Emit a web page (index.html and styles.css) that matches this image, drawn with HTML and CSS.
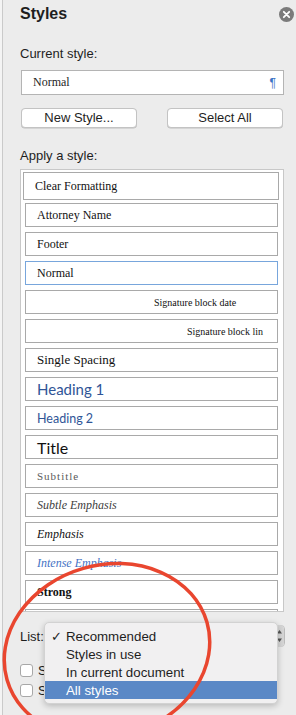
FILE: index.html
```html
<!DOCTYPE html>
<html>
<head>
<meta charset="utf-8">
<link rel="stylesheet" href="styles.css">
</head>
<body>
<div class="panel">
  <div class="head">
    <h1 class="title">Styles</h1>
    <span class="close"><svg width="15" height="15" viewBox="0 0 15 15"><circle cx="7.5" cy="7.5" r="7.5" fill="#7b7b7b"/><path d="M4.8 4.8 L10.2 10.2 M10.2 4.8 L4.8 10.2" stroke="#fff" stroke-width="1.8" stroke-linecap="round"/></svg></span>
  </div>
  <div class="label l1">Current style:</div>
  <div class="current"><span class="cur-name">Normal</span><span class="pil">¶</span></div>
  <div class="btns">
    <button class="btn">New Style...</button>
    <button class="btn">Select All</button>
  </div>
  <div class="label l2">Apply a style:</div>
  <div class="list">
    <div class="item clear">Clear Formatting</div>
    <div class="item">Attorney Name</div>
    <div class="item">Footer</div>
    <div class="item sel">Normal</div>
    <div class="item sig sig1">Signature block date</div>
    <div class="item sig sig2">Signature block lin</div>
    <div class="item single">Single Spacing</div>
    <div class="item h1">Heading 1</div>
    <div class="item h2">Heading 2</div>
    <div class="item ttl">Title</div>
    <div class="item sub">Subtitle</div>
    <div class="item sube">Subtle Emphasis</div>
    <div class="item emph">Emphasis</div>
    <div class="item inte">Intense Emphasis</div>
    <div class="item strong">Strong</div>
    <div class="item"></div>
  </div>
  <div class="listrow">
    <span class="list-label">List:</span>
    <div class="select">
      <span class="stepper"><svg width="9" height="22" viewBox="0 0 9 22"><path d="M4.5 5 L7 8.5 L2 8.5 Z M4.5 17 L7 13.5 L2 13.5 Z" fill="#555"/></svg></span>
    </div>
  </div>
  <div class="checks">
    <label class="chk"><span class="box"></span><span class="ct">S</span></label>
    <label class="chk"><span class="box"></span><span class="ct">S</span></label>
  </div>

  <div class="menu">
    <div class="mi"><span class="tick">✓</span>Recommended</div>
    <div class="mi"><span class="tick"></span>Styles in use</div>
    <div class="mi"><span class="tick"></span>In current document</div>
    <div class="mi hi"><span class="tick"></span>All styles</div>
  </div>
  <svg class="ring" width="296" height="715" viewBox="0 0 296 715">
    <ellipse cx="107" cy="651" rx="104" ry="86" transform="rotate(-16 107 651)" fill="none" stroke="#e9462f" stroke-width="3.5"/>
  </svg>
</div>
</body>
</html>
```
FILE: styles.css
```css
html, body {
  margin: 0;
  padding: 0;
  background: #f4f4f4;
}
body {
  width: 296px;
  height: 715px;
  overflow: hidden;
  font-family: "Liberation Sans", Arial, sans-serif;
  color: #1e1e1e;
}
.panel {
  position: relative;
  margin-left: 2px;
  border-left: 1px solid #cacaca;
  background: #ececec;
  height: 715px;
  box-sizing: border-box;
  padding: 0 12px 0 17px;
}
.head {
  display: flex;
  justify-content: space-between;
  align-items: flex-start;
  height: 40px;
}
.title {
  margin: 0;
  padding-top: 5px;
  font-size: 16px;
  font-weight: bold;
  line-height: 18px;
}
.close {
  margin-top: 7px;
  margin-right: -10px;
  display: block;
  height: 15px;
}
.label {
  font-size: 13px;
  line-height: 15px;
}
.l1 { margin-top: 6px; }
.current {
  margin-top: 9px;
  margin-left: 1px;
  height: 25px;
  box-sizing: border-box;
  background: #fff;
  border: 1px solid #b4b4b4;
  display: flex;
  justify-content: space-between;
  align-items: center;
  padding: 0 7px 0 11px;
}
.cur-name {
  font-family: "Liberation Serif", "Times New Roman", serif;
  font-size: 12px;
}
.pil {
  color: #3b73c4;
  font-size: 12px;
}
.btns {
  margin-top: 13px;
  display: flex;
  justify-content: space-between;
  padding-left: 1px;
  padding-right: 1px;
}
.btn {
  width: 116px;
  height: 20px;
  box-sizing: border-box;
  background: #fff;
  border: 1px solid #c3c3c3;
  border-radius: 4px;
  font-family: "Liberation Sans", Arial, sans-serif;
  font-size: 13px;
  color: #1e1e1e;
  padding: 0;
  line-height: 18px;
  box-shadow: 0 0.5px 0 #bdbdbd;
}
.l2 { margin-top: 20px; }
.list {
  margin-top: 6px;
  height: 443px;
  box-sizing: border-box;
  border: 1px solid #c8c8c8;
  background: #fff;
  overflow: hidden;
  padding: 2px 2px 0 2px;
  display: flex;
  flex-direction: column;
  gap: 5px;
}
.item {
  flex: none;
  height: 24px;
  box-sizing: border-box;
  margin: 0 3px 0 2px;
  border: 1px solid #a9a9a9;
  display: flex;
  align-items: center;
  padding-left: 11px;
  font-family: "Liberation Serif", "Times New Roman", serif;
  font-size: 12px;
  color: #111;
  white-space: nowrap;
}
.item.clear {
  height: 28px;
  margin: 0 2px 0 0;
  padding-left: 11px;
  margin-bottom: -2px;
}
.item.sel { border-color: #78a6dc; }
.item.sig { font-size: 10px; }
.sig1 { padding-left: 128px; }
.sig2 { padding-left: 161px; }
.item.single { font-size: 13px; }
.item.h1 {
  font-family: Lato, "Open Sans", sans-serif;
  font-size: 15px;
  color: #2f5597;
}
.item.h2 {
  font-family: Lato, "Open Sans", sans-serif;
  font-size: 12.5px;
  color: #2f5597;
}
.item.ttl {
  font-family: Lato, "Open Sans", sans-serif;
  font-size: 16px;
  color: #111;
}
.item.sub {
  font-size: 11px;
  letter-spacing: 1px;
  color: #5a5a5a;
}
.item.sube {
  font-style: italic;
  color: #404040;
}
.item.emph { font-style: italic; }
.item.inte {
  font-style: italic;
  color: #4472c4;
}
.item.strong { font-weight: bold; }

.listrow {
  margin-top: 13px;
  display: flex;
  align-items: center;
  height: 22px;
}
.list-label {
  font-size: 13px;
  width: 30px;
}
.select {
  flex: 1;
  height: 22px;
  box-sizing: border-box;
  border: 1px solid #bcbcbc;
  border-radius: 4px;
  background: #fff;
  display: flex;
  align-items: center;
  justify-content: flex-end;
  margin-right: -1px;
}
.stepper {
  width: 9px;
  height: 22px;
  background: #d6d6d6;
  border-left: 1px solid #bcbcbc;
  border-radius: 0 4px 4px 0;
  display: block;
}
.checks {
  margin-top: 16px;
  display: flex;
  flex-direction: column;
  gap: 6px;
}
.chk {
  display: flex;
  align-items: center;
  gap: 5px;
  font-size: 13px;
  height: 14px;
}
.box {
  width: 13px;
  height: 13px;
  box-sizing: border-box;
  border: 1px solid #a8a8a8;
  border-radius: 3px;
  background: #fff;
}
.menu {
  position: absolute;
  left: 41px;
  top: 622px;
  width: 234px;
  box-sizing: border-box;
  background: #f1f0f1;
  border: 1px solid #d2d2d2;
  border-radius: 5px;
  box-shadow: 0 2px 6px rgba(0,0,0,0.22);
  padding: 4px 0 4px 0;
}
.mi {
  height: 18px;
  display: flex;
  align-items: center;
  font-size: 13.3px;
  color: #1e1e1e;
}
.tick {
  width: 21px;
  padding-left: 6px;
  box-sizing: border-box;
  font-size: 13px;
}
.mi.hi {
  background: #5a88c6;
  color: #fff;
}
.ring {
  position: absolute;
  left: -3px;
  top: 0;
  pointer-events: none;
}
```
